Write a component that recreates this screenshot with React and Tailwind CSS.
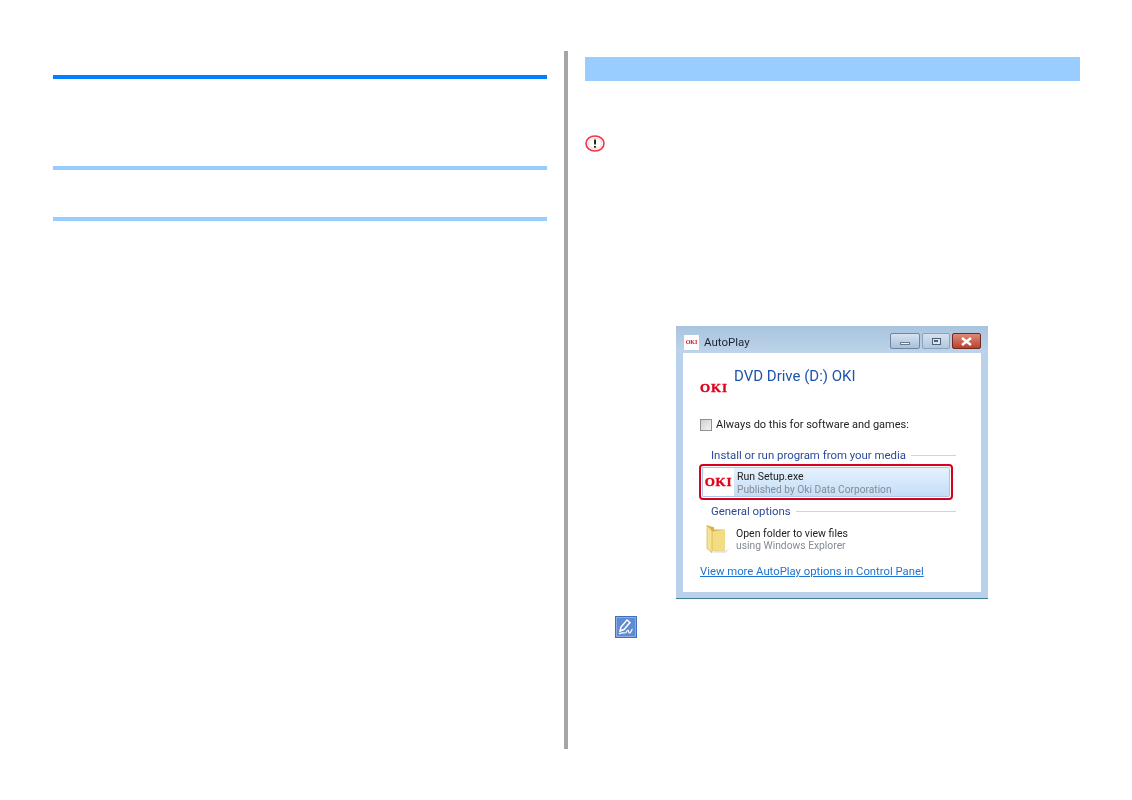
const font = { fontFamily: 'Roboto, "Noto Sans", sans-serif' };
const slab = { fontFamily: '"Liberation Serif", serif' };

function SectionLabel({ children }) {
  return (
    <div className="flex items-center gap-[5px] pl-[28px] pr-[25px] text-[11.4px] leading-[16px] text-[#2b4a9b]">
      <span className="whitespace-nowrap">{children}</span>
      <span className="h-px flex-1 bg-[#c9d6ea]" />
    </div>
  );
}

function WindowButton({ children, className }) {
  return (
    <div className={`flex h-[16px] items-center justify-center rounded-[2px] border ${className}`}>
      {children}
    </div>
  );
}

function AutoPlay() {
  return (
    <div className="h-[274px] w-[312px] pt-px blur-[0.3px]" style={font}>
      <div className="flex h-[273px] flex-col border-b border-[#3f7f96] bg-[#b9d1ea]">
        <div className="flex h-[27px] shrink-0 items-center bg-gradient-to-b from-[#a9c4de] to-[#bdd4ea] pl-[8px] pr-[7px] pt-[3px]">
          <div className="mt-[2px] flex h-[15px] w-[15px] items-center justify-center bg-white text-[6px] font-bold leading-none text-[#e2001a]" style={slab}>
            OKI
          </div>
          <span className="ml-[5px] mt-[4px] text-[11.5px] text-[#1c2430]">AutoPlay</span>
          <div className="ml-auto flex gap-[2px]">
            <WindowButton className="w-[30px] border-[#6f86a3] bg-gradient-to-b from-[#d6e2ef] to-[#a9c0da]">
              <span className="mt-[4px] h-[3px] w-[10px] border border-[#6a7b90] bg-[#eef2f6]" />
            </WindowButton>
            <WindowButton className="w-[28px] border-[#8da2bc] bg-gradient-to-b from-[#d6e2ef] to-[#b0c7df]">
              <span className="flex h-[7px] w-[9px] items-center justify-center border border-[#50627a] bg-[#dce6f0]">
                <span className="h-[2px] w-[4px] bg-[#50627a]" />
              </span>
            </WindowButton>
            <WindowButton className="w-[29px] border-[#6e2a22] bg-gradient-to-b from-[#e08a78] to-[#b8402c]">
              <svg width="13" height="9" viewBox="0 0 13 9">
                <path d="M2 1l9 7M11 1L2 8" stroke="#fff" strokeWidth="2.4" />
              </svg>
            </WindowButton>
          </div>
        </div>

        <div className="mx-[7px] flex h-[239px] flex-col bg-white">
          <div className="flex items-start pl-[17px] pt-[13px]">
            <span className="mt-[17px] w-[34px] text-[13px] font-bold leading-[10px] tracking-[0.9px] text-[#e2001a] [-webkit-text-stroke:0.4px_#e2001a]" style={slab}>
              OKI
            </span>
            <span className="text-[15px] leading-[20px] text-[#1f55a8]">DVD Drive (D:) OKI</span>
          </div>

          <div className="mt-[24px] flex items-center pl-[17px]">
            <span className="h-[12px] w-[12px] border border-[#8e8f8f] bg-gradient-to-br from-[#d0d0d0] to-[#f4f4f4]" />
            <span className="ml-[4px] text-[11px] leading-[16px] text-[#222]">Always do this for software and games:</span>
          </div>

          <div className="mt-[14px]">
            <SectionLabel>Install or run program from your media</SectionLabel>
          </div>

          <div className="ml-[16px] mt-[1px] flex h-[36px] w-[254px] items-stretch rounded-[4px] border-2 border-[#d8001f] bg-white p-px">
            <div className="flex w-[32px] items-center justify-center rounded-l-[2px] border border-r-0 border-[#a9c7e6] bg-white text-[13px] font-bold tracking-[0.8px] text-[#e2001a] [-webkit-text-stroke:0.4px_#e2001a]" style={slab}>
              OKI
            </div>
            <div className="flex-1 rounded-r-[2px] border border-l-0 border-[#a9c7e6] bg-gradient-to-b from-[#e6f1fc] to-[#c4def7] pl-[3px] pt-[3px]">
              <div className="text-[10.5px] leading-[12px] text-[#222]">Run Setup.exe</div>
              <div className="text-[10.2px] leading-[13px] text-[#858b92]">Published by Oki Data Corporation</div>
            </div>
          </div>

          <div className="mt-[3px]">
            <SectionLabel>General options</SectionLabel>
          </div>

          <div className="mt-[3px] flex pl-[21px]">
            <svg width="28" height="34" viewBox="0 0 28 32" preserveAspectRatio="none">
              <path d="M3 3l7 2v2l10 0v20H8l-5-2z" fill="#d9b24a" />
              <path d="M8 9l13-2v20H8z" fill="#f2dc84" />
              <path d="M3 3l5 5v21l-5-4z" fill="#f6e496" stroke="#d0a93f" strokeWidth=".6" />
              <path d="M9 27h13l4-3-4 5H10z" fill="#c9ced4" opacity=".6" />
            </svg>
            <div className="ml-[4px] pt-[5px]">
              <div className="text-[10.5px] leading-[13px] text-[#222]">Open folder to view files</div>
              <div className="text-[10.3px] leading-[12px] text-[#858b92]">using Windows Explorer</div>
            </div>
          </div>

          <div className="mt-[8px] pl-[17px] text-[11.3px] leading-[16px] text-[#1f74d0] underline">
            View more AutoPlay options in Control Panel
          </div>
        </div>
      </div>
    </div>
  );
}

export default function App() {
  return (
    <div className="flex h-[800px] w-[1132px] bg-white pl-[53px] pt-[51px]">
      <div className="w-[494px] pt-[24px]">
        <div className="h-[4px] bg-[#0080ff]" />
        <div className="mt-[87px] h-[4px] bg-[#99ccff]" />
        <div className="mt-[47px] h-[4px] bg-[#99ccff]" />
      </div>

      <div className="ml-[17px] h-[698px] w-[4px] bg-[#a6a6a6]" />

      <div className="ml-[17px] w-[495px] pt-[6px]">
        <div className="h-[24px] bg-[#99ccff]" />

        <svg className="mt-[54px]" width="21" height="17" viewBox="0 0 21 17">
          <ellipse cx="10" cy="8.5" rx="9" ry="7.5" fill="#fff" stroke="#ee3344" strokeWidth="1.6" />
          <ellipse cx="10" cy="8.5" rx="6.6" ry="5.4" fill="none" stroke="#f8c8c0" strokeWidth=".8" />
          <path d="M10 4.5v5" stroke="#111" strokeWidth="1.8" />
          <path d="M10 11v1.8" stroke="#111" strokeWidth="1.8" />
        </svg>

        <div className="ml-[91px] mt-[173px]">
          <AutoPlay />
        </div>

        <svg className="ml-[30px] mt-[17px]" width="22" height="22" viewBox="0 0 22 22">
          <rect width="22" height="22" fill="#3f6fc0" />
          <rect x="1.5" y="1.5" width="19" height="19" fill="#5f8bd2" stroke="#9db9e4" strokeWidth=".8" />
          <path d="M5 15l1-4 6-7 3 2.5-6 7z" fill="none" stroke="#fff" strokeWidth="1.5" />
          <path d="M4 18c2-2 4-1 6-1 1.5 0 2-3 3-3s0 3 1.5 3 1.5-3 3-4" fill="none" stroke="#fff" strokeWidth="1.2" />
        </svg>
      </div>
    </div>
  );
}
